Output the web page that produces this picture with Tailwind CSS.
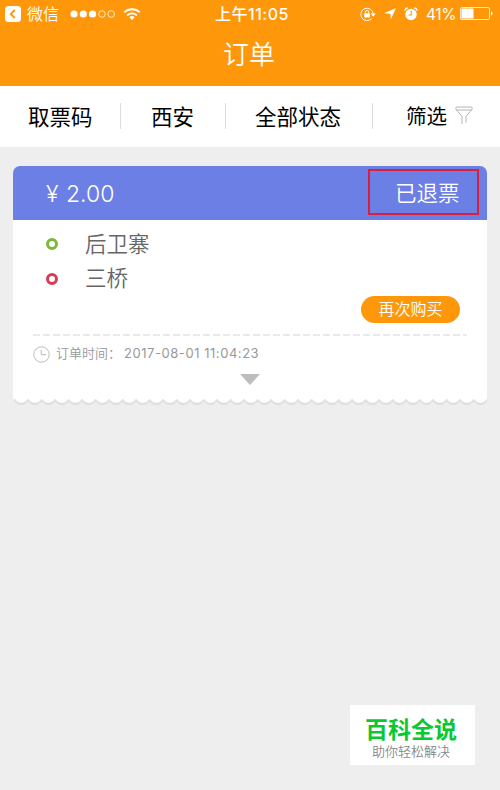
<!DOCTYPE html>
<html lang="zh-CN">

<head>
    <meta charset="UTF-8">
    <meta name="viewport" content="width=device-width, initial-scale=1.0">
    <title>订单</title>
    <script src="https://cdn.jsdelivr.net/npm/@tailwindcss/browser@4"></script>
</head>

<body class="bg-[#eeeeee] font-['Inter','Noto_Sans_CJK_SC',sans-serif]">
    <div class="relative w-[500px] h-[790px] overflow-hidden">
        <!-- Header -->
        <header class="h-[86px] bg-[#ff970a] text-white">
            <!-- Status bar -->
            <div class="relative flex items-center h-[27px] pl-[5px] pr-[7px]">
                <svg class="w-4 h-4 mr-[6px]" viewBox="0 0 16 16">
                    <rect width="16" height="16" rx="3.5" fill="#fff" />
                    <path d="M9.8 4 5.8 8l4 4" fill="none" stroke="#ff970a" stroke-width="1.8" />
                </svg>
                <span class="pt-px text-[16px] leading-[27px] font-[350]">微信</span>
                <svg class="w-[46px] h-2 ml-[11px]" viewBox="0 0 46 8">
                    <g fill="#fff">
                        <circle cx="4" cy="4" r="3.6" />
                        <circle cx="13.3" cy="4" r="3.6" />
                        <circle cx="22.6" cy="4" r="3.6" />
                    </g>
                    <g fill="none" stroke="#fff" stroke-width=".8">
                        <circle cx="32" cy="4" r="3.3" />
                        <circle cx="41.2" cy="4" r="3.3" />
                    </g>
                </svg>
                <svg class="w-[18px] h-3 ml-[7px]" viewBox="0 0 18 12">
                    <g fill="none" stroke="#fff" stroke-width="1.8">
                        <path d="M1.2 4.4a11.2 11.2 0 0 1 15.6 0" />
                        <path d="M4.1 7.3a7.1 7.1 0 0 1 9.8 0" />
                    </g>
                    <path d="M9 12 6.3 9.3a3.9 3.9 0 0 1 5.4 0z" fill="#fff" />
                </svg>
                <span class="absolute left-[215px] top-0 text-[16px] leading-[28px] font-medium tracking-[0.5px] whitespace-nowrap">上午11:05</span>
                <div class="flex items-center ml-auto">
                    <!-- Rotation lock -->
                    <svg class="w-4 h-[14px]" viewBox="0 0 16 14">
                        <path d="M11.6 11.6A6.2 6.2 0 1 1 13.2 7" fill="none" stroke="#fff" stroke-width="1" />
                        <path d="M10.7 6.6h5L13.2 9.7z" fill="#fff" />
                        <rect x="4.2" y="6.3" width="5.8" height="4.2" rx=".4" fill="#fff" />
                        <path d="M5.4 6.5V5.2a1.7 1.7 0 0 1 3.4 0v1.3" fill="none" stroke="#fff" stroke-width="1" />
                    </svg>
                    <svg class="w-3 h-3 ml-2" viewBox="0 0 12 12">
                        <path d="M12 0 6.8 11.5 6.3 5.8 0 5.3z" fill="#fff" />
                    </svg>
                    <!-- Alarm -->
                    <svg class="w-[14px] h-[14px] ml-2" viewBox="0 0 14 14">
                        <circle cx="7" cy="7.5" r="5.7" fill="#fff" />
                        <path d="M.9 3.7A3 3 0 0 1 3.8 1M13.1 3.7A3 3 0 0 0 10.2 1" fill="none" stroke="#fff" stroke-width="1.3" />
                        <path d="M7.2 4v4H4.5" fill="none" stroke="#ff970a" stroke-width="1.1" />
                    </svg>
                    <span class="w-[31px] ml-[8px] pt-px text-[15.5px] leading-[27px] tracking-[-0.4px] whitespace-nowrap">41%</span>
                    <svg class="w-[33px] h-[13px] ml-[3px]" viewBox="0 0 33 13">
                        <rect x=".5" y=".5" width="29" height="12" rx="1.5" fill="none" stroke="#fff" stroke-opacity=".8" />
                        <rect x="1.5" y="1.5" width="12" height="10" rx=".5" fill="#fff" />
                        <path d="M31 4.3q1.6.6 1.6 2.2T31 8.7z" fill="#fff" />
                    </svg>
                </div>
            </div>
            <h1 class="pr-[2px] text-center text-[26px] leading-[56px] font-[350]">订单</h1>
        </header>

        <!-- Filter tabs -->
        <nav class="flex items-center h-[61px] bg-white text-[21.5px] text-black leading-[60px] whitespace-nowrap">
            <span class="w-[120px] pl-[28px]">取票码</span>
            <i class="w-px h-[26px] mb-[2px] bg-[#dddddd]"></i>
            <span class="w-[104px] pl-[30px]">西安</span>
            <i class="w-px h-[26px] mb-[2px] bg-[#dddddd]"></i>
            <span class="w-[146px] pl-[29px]">全部状态</span>
            <i class="w-px h-[26px] mb-[2px] bg-[#dddddd]"></i>
            <span class="pl-[33px] text-[20.5px]">筛选</span>
            <svg class="w-[18px] h-[19px] ml-[8px] mb-[2px]" viewBox="0 0 18 19" fill="none" stroke="#aaaaaa" stroke-width=".9">
                <rect x=".7" y="1" width="16.6" height="3" rx="1.5" />
                <path d="M1.5 4 7 10.4V18M16.5 4 11 10.4V16.5" />
            </svg>
        </nav>

        <!-- Order card -->
        <section class="mx-[13px] mt-[19px]">
            <div class="flex items-center justify-between h-[54px] pl-[33px] pr-[8px] rounded-t-[7px] bg-[#6c7fe4] text-white">
                <p class="flex items-center pt-px text-[23px] leading-[54px] font-[350]">
                    <span class="w-[20px]">¥</span>
                    <span>2.00</span>
                </p>
                <div class="flex items-center h-[46px] w-[111px] mt-[-3px] pl-[25px] pt-[3px] border-2 border-[#d91f3e] text-[21.5px] font-[350]">已退票</div>
            </div>
            <div class="h-[174px] px-[20px] bg-white">
                <div class="h-[114px] pt-[7px]">
                    <div class="flex items-center h-[34px] pl-[13px]">
                        <i class="w-3 h-3 rounded-full border-[3px] border-[#7cb83a]"></i>
                        <span class="ml-[27px] text-[21.5px] font-[350] text-[#666666]">后卫寨</span>
                    </div>
                    <div class="flex items-center h-[35px] pl-[13px]">
                        <i class="w-3 h-3 rounded-full border-[3px] border-[#d93a55]"></i>
                        <span class="ml-[27px] text-[21.5px] font-[350] text-[#666666]">三桥</span>
                    </div>
                    <div class="flex justify-end pr-[7px]">
                        <button class="w-[99px] h-[27px] rounded-full bg-[#ff970a] text-white text-[16px] leading-[27px] font-[350]">再次购买</button>
                    </div>
                </div>
                <svg class="block w-[434px] h-[2px]" viewBox="0 0 434 2">
                    <path d="M0 1h434" stroke="#d6d6d6" stroke-width="1.2" stroke-dasharray="7 3" />
                </svg>
                <div class="flex items-center h-[36px] text-[13px] text-[#999999] whitespace-nowrap">
                    <svg class="w-[17px] h-[17px]" viewBox="0 0 17 17" fill="none" stroke="#bbbbbb" stroke-width="1">
                        <circle cx="8.5" cy="8.5" r="7.7" />
                        <path d="M8.2 4v4.7h5" />
                    </svg>
                    <span class="ml-[6px] w-[68px] font-[350]">订单时间：</span>
                    <span class="tracking-[0.55px]">2017-08-01 11:04:23</span>
                </div>
                <svg class="block w-[20px] h-[11px] mt-[2px] ml-[207px]" viewBox="0 0 20 11">
                    <path d="M0 0h20L10 11z" fill="#bdbdbd" />
                </svg>
            </div>
            <!-- Scalloped bottom edge -->
            <svg class="block w-[474px] h-[14px]" viewBox="0 0 474 14">
                <defs>
                    <pattern id="scallop" x="1.6" width="13.5" height="14" patternUnits="userSpaceOnUse">
                        <path d="M0 0H13.5V7.5Q11 11.2 6.75 11.2T0 7.5z" fill="#e0e0e0" />
                        <path d="M0 0H13.5V4.6Q11 8.8 6.75 8.8T0 4.6z" fill="#fff" />
                    </pattern>
                </defs>
                <path d="M0 0H474V14H6Q0 8 0 2z" fill="url(#scallop)" />
            </svg>
        </section>

        <!-- Site badge -->
        <div class="absolute left-[350px] top-[705px] w-[125px] h-[60px] bg-white text-center whitespace-nowrap">
            <p class="mt-[10px] pr-[3px] text-[23px] leading-[30px] font-bold text-[#0ac832]">百科全说</p>
            <p class="pr-[3px] text-[13px] leading-[13px] font-[350] text-[#888888]">助你轻松解决</p>
        </div>
    </div>
</body>

</html>
